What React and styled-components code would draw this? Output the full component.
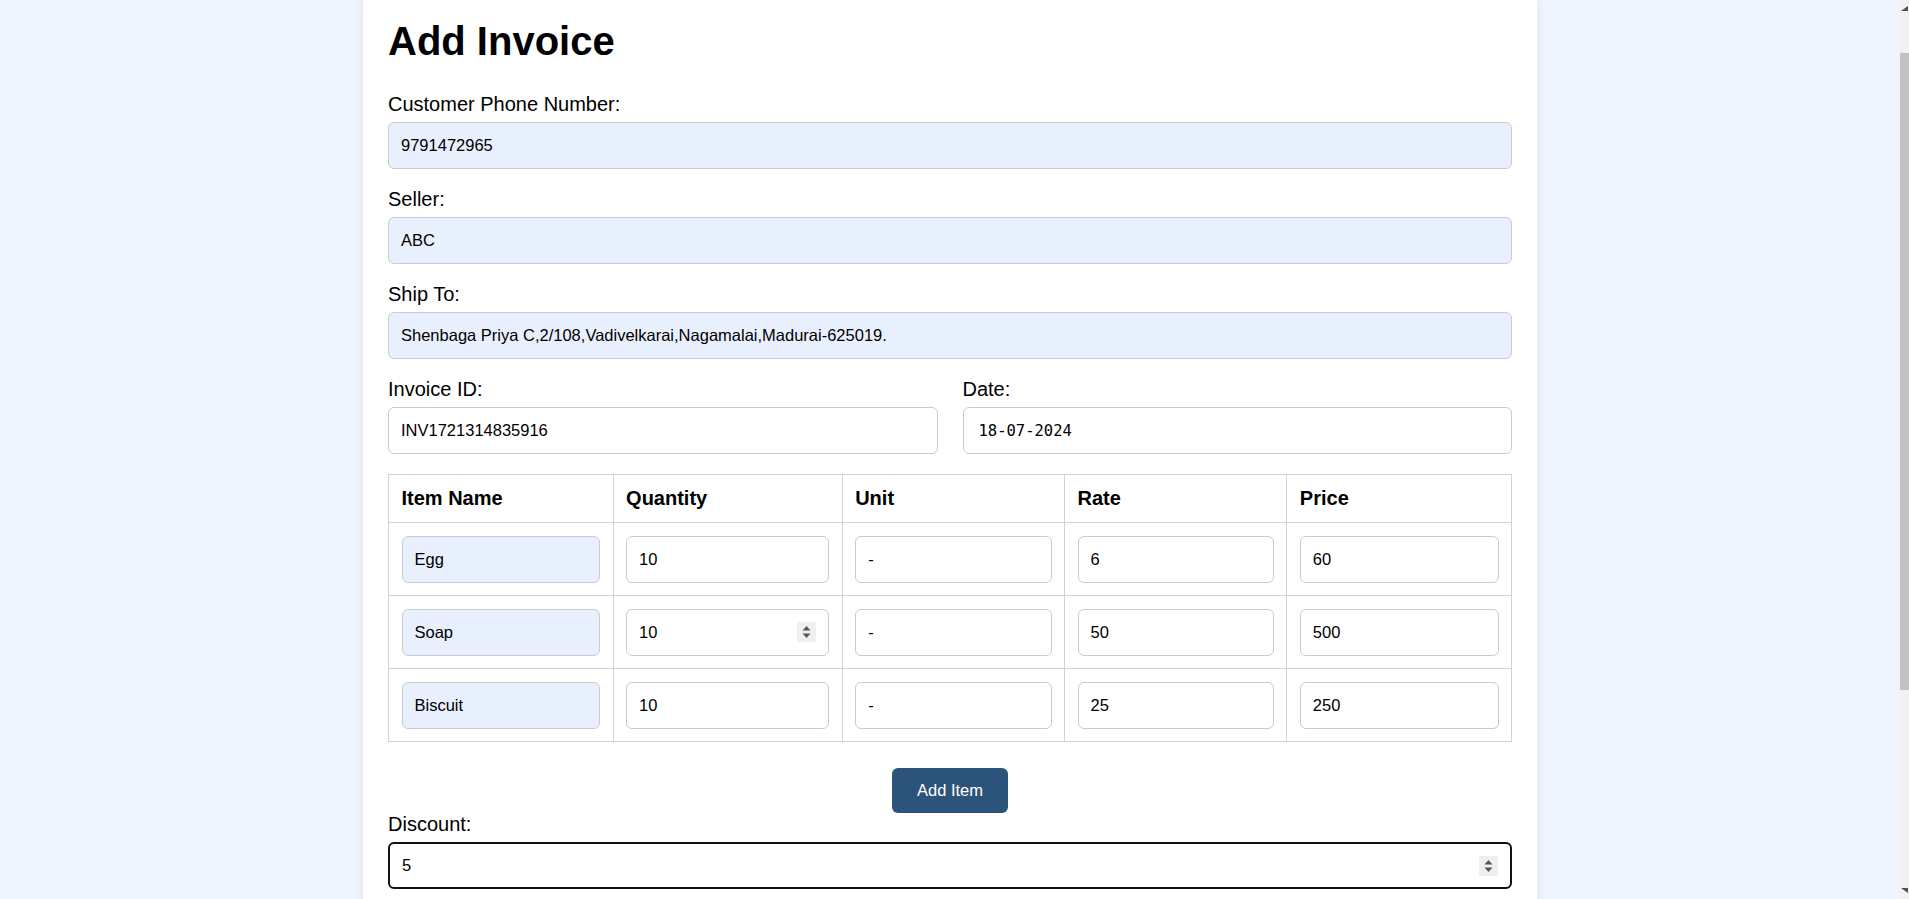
import React from 'react';
import styled, { createGlobalStyle } from 'styled-components';

const GlobalStyle = createGlobalStyle`
  body {
    margin: 0;
    padding-right: 9px;
    background: #eef5fe;
    font-family: "Liberation Sans", Arial, sans-serif;
    color: #000;
  }
  * {
    box-sizing: border-box;
  }
`;

const Card = styled.div`
  width: 1174px;
  margin: 0 auto 30px;
  padding: 18px 25px 30px;
  background: #fff;
  box-shadow: 0 0 12px rgba(0, 0, 0, 0.08);
`;

const Title = styled.h1`
  margin: 0 0 29px;
  font-size: 40px;
  font-weight: 700;
  line-height: 46px;
`;

const Field = styled.div`
  margin-bottom: ${(p) => (p.$tight ? '0' : '19px')};
`;

const Label = styled.label`
  display: block;
  font-size: 20px;
  line-height: 23px;
  margin-bottom: 6px;
`;

const Input = styled.input`
  display: block;
  width: 100%;
  height: 47px;
  padding: 0 ${(p) => (p.$mono ? '15px' : '12px')};
  border: ${(p) => (p.$active ? '2px solid #111' : '1px solid #cbcbcb')};
  border-radius: 6px;
  background: ${(p) => (p.$filled ? '#e8f0fe' : '#fff')};
  font-family: ${(p) =>
    p.$mono ? '"DejaVu Sans Mono", "Liberation Mono", monospace' : '"Liberation Sans", Arial, sans-serif'};
  font-size: ${(p) => (p.$mono ? '15.5px' : '16.5px')};
  color: #000;
  outline: none;
`;

const TwoCols = styled.div`
  display: grid;
  grid-template-columns: 1fr 1fr;
  gap: 25px;
`;

const ItemTable = styled.table`
  width: 100%;
  table-layout: fixed;
  border-collapse: collapse;
  margin-top: 1px;
`;

const Col = styled.col`
  width: ${(p) => p.$w}%;
`;

const Th = styled.th`
  padding: 12px 12.5px;
  border: 1px solid #d2d2d2;
  text-align: left;
  font-size: 20px;
  line-height: 23px;
  font-weight: 700;
`;

const Td = styled.td`
  padding: 12.5px;
  border: 1px solid #d2d2d2;
`;

const SpinWrap = styled.div`
  position: relative;
`;

const Spinner = styled.span`
  position: absolute;
  top: 50%;
  right: ${(p) => p.$right}px;
  width: 19px;
  height: 20px;
  margin-top: -10px;
  background: #efefef;
  display: flex;
  align-items: center;
  justify-content: center;
  pointer-events: none;
`;

const ButtonRow = styled.div`
  display: flex;
  justify-content: center;
  margin-top: 26px;
`;

const AddButton = styled.button`
  height: 45px;
  padding: 0 25px;
  border: none;
  border-radius: 6px;
  background: ${(p) => p.$bg || '#2c5379'};
  color: #fff;
  font-family: "Liberation Sans", Arial, sans-serif;
  font-size: 16.5px;
  cursor: pointer;
`;

const Footer = styled.div`
  display: flex;
  justify-content: center;
  gap: 20px;
  margin-top: 40px;
`;

/* window scrollbar, drawn over the right edge */
const ScrollBar = styled.div`
  position: fixed;
  top: 0;
  right: 0;
  bottom: 0;
  width: 10px;
  background: #f1f1f1;
  display: flex;
  flex-direction: column;
  justify-content: space-between;
  align-items: flex-end;
`;

const Thumb = styled.div`
  position: absolute;
  top: 53px;
  right: 0;
  width: 9px;
  height: 637px;
  background: #c1c1c1;
`;

const Arrow = styled.svg`
  display: block;
  margin: 6px 0;
`;

const colWidths = [20, 20.4, 19.8, 19.8, 20];

const items = [
  { name: 'Egg', qty: '10', unit: '-', rate: '6', price: '60' },
  { name: 'Soap', qty: '10', unit: '-', rate: '50', price: '500', spin: true },
  { name: 'Biscuit', qty: '10', unit: '-', rate: '25', price: '250' },
];

function SpinIcon() {
  return (
    <svg width="19" height="20" viewBox="0 0 19 20">
      <polygon points="5.5,8.5 13.5,8.5 9.5,4" fill="#555" />
      <polygon points="5.5,11.5 13.5,11.5 9.5,16" fill="#555" />
    </svg>
  );
}

export default function App() {
  return (
    <>
      <GlobalStyle />
      <Card>
        <Title>Add Invoice</Title>

        <Field>
          <Label>Customer Phone Number:</Label>
          <Input $filled defaultValue="9791472965" />
        </Field>
        <Field>
          <Label>Seller:</Label>
          <Input $filled defaultValue="ABC" />
        </Field>
        <Field>
          <Label>Ship To:</Label>
          <Input $filled defaultValue="Shenbaga Priya C,2/108,Vadivelkarai,Nagamalai,Madurai-625019." />
        </Field>

        <TwoCols>
          <Field>
            <Label>Invoice ID:</Label>
            <Input defaultValue="INV1721314835916" />
          </Field>
          <Field>
            <Label>Date:</Label>
            <Input $mono defaultValue="18-07-2024" />
          </Field>
        </TwoCols>

        <ItemTable>
          <colgroup>
            {colWidths.map((w, i) => (
              <Col key={i} $w={w} />
            ))}
          </colgroup>
          <thead>
            <tr>
              <Th>Item Name</Th>
              <Th>Quantity</Th>
              <Th>Unit</Th>
              <Th>Rate</Th>
              <Th>Price</Th>
            </tr>
          </thead>
          <tbody>
            {items.map((it) => (
              <tr key={it.name}>
                <Td>
                  <Input $filled defaultValue={it.name} />
                </Td>
                <Td>
                  <SpinWrap>
                    <Input defaultValue={it.qty} />
                    {it.spin && (
                      <Spinner $right={13}>
                        <SpinIcon />
                      </Spinner>
                    )}
                  </SpinWrap>
                </Td>
                <Td>
                  <Input defaultValue={it.unit} />
                </Td>
                <Td>
                  <Input defaultValue={it.rate} />
                </Td>
                <Td>
                  <Input defaultValue={it.price} />
                </Td>
              </tr>
            ))}
          </tbody>
        </ItemTable>

        <ButtonRow>
          <AddButton type="button">Add Item</AddButton>
        </ButtonRow>

        <Field>
          <Label>Discount:</Label>
          <SpinWrap>
            <Input $active defaultValue="5" />
            <Spinner $right={14}>
              <SpinIcon />
            </Spinner>
          </SpinWrap>
        </Field>
        <Field style={{ marginTop: 30 }}>
          <Label>Total Amount:</Label>
          <Input defaultValue="769.5" />
        </Field>
        <Field $tight>
          <Label>Payment Status:</Label>
          <Input defaultValue="Paid" />
        </Field>

        <Footer>
          <AddButton type="button">Save Invoice</AddButton>
          <AddButton type="button" $bg="#3a7d44">Download PDF</AddButton>
        </Footer>
      </Card>

      <ScrollBar>
        <Arrow width="9" height="5" viewBox="0 0 9 5">
          <polygon points="1,5 8,5 8,0" fill="#505050" />
        </Arrow>
        <Thumb />
        <Arrow width="9" height="5" viewBox="0 0 9 5">
          <polygon points="1,0 8,0 8,5" fill="#505050" />
        </Arrow>
      </ScrollBar>
    </>
  );
}
